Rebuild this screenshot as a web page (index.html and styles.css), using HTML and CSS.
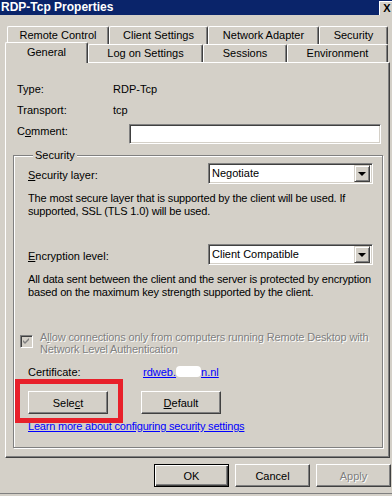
FILE: index.html
```html
<!DOCTYPE html>
<html lang="en">

<head>
  <meta charset="UTF-8">
  <meta name="viewport" content="width=device-width, initial-scale=1.0">
  <title>RDP-Tcp Properties</title>
  <link rel="stylesheet" href="styles.css">
</head>

<body>
  <div class="dialog">
    <div class="titlebar">
      <span class="title">RDP-Tcp Properties</span>
      <span class="close">X</span>
    </div>

    <div class="tabs">
      <div class="tabrow back">
        <div class="tab t-remote">Remote Control</div>
        <div class="tab t-client">Client Settings</div>
        <div class="tab t-network">Network Adapter</div>
        <div class="tab t-security">Security</div>
      </div>
      <div class="tabrow front">
        <div class="tab t-general active">General</div>
        <div class="tab t-logon">Log on Settings</div>
        <div class="tab t-sessions">Sessions</div>
        <div class="tab t-env">Environment</div>
      </div>
    </div>

    <div class="panel">
      <div class="info">
        <span>Type:</span><span>RDP-Tcp</span>
        <span>Transport:</span><span>tcp</span>
      </div>
      <div class="comment-row">
        <label>C<u>o</u>mment:</label>
        <div class="textbox"></div>
      </div>

      <fieldset class="group">
        <legend>Security</legend>

        <div class="setting first">
          <label><u>S</u>ecurity layer:</label>
          <div class="combo"><span>Negotiate</span><i class="drop"></i></div>
        </div>
        <p class="desc">The most secure layer that is supported by the client will be used. If<br>supported, SSL (TLS 1.0) will be used.</p>

        <div class="setting second">
          <label><u>E</u>ncryption level:</label>
          <div class="combo"><span>Client Compatible</span><i class="drop"></i></div>
        </div>
        <p class="desc">All data sent between the client and the server is protected by encryption<br>based on the maximum key strength supported by the client.</p>

        <div class="check-row">
          <span class="checkbox">
            <svg width="7" height="7" viewBox="0 0 7 7"><path d="M0 2 L2 4 L6 0 L6 2 L2 6 L0 4 Z" fill="#808080"/></svg>
          </span>
          <span class="disabled">A<u>l</u>low connections only from computers running Remote Desktop with<br>Network Level Authentication</span>
        </div>

        <div class="cert-row">
          <span>Certificate:</span>
          <a class="link">rdweb.<span class="redact"></span>n.nl</a>
        </div>

        <div class="btn-row">
          <button class="btn">Sele<u>c</u>t</button>
          <button class="btn"><u>D</u>efault</button>
        </div>

        <a class="link learn">Learn more about configuring security settings</a>
      </fieldset>
    </div>

    <div class="footer">
      <button class="btn default">OK</button>
      <button class="btn">Cancel</button>
      <button class="btn disabled">Apply</button>
    </div>
    <div class="edge"></div>

    <div class="callout"></div>
  </div>
</body>

</html>
```

FILE: styles.css
```css
body {
  margin: 0;
  background-color: #d4d0c8;
  font-family: "Liberation Sans", Arial, sans-serif;
  font-size: 11px;
  line-height: 13px;
  color: #000;
}

.dialog {
  position: relative;
  width: 392px;
  height: 496px;
  overflow: hidden;
  white-space: nowrap;
}

u {
  text-decoration: underline;
}

/* title bar */

.titlebar {
  height: 15px;
  background-color: #0a246a;
  display: flex;
  align-items: center;
  justify-content: space-between;
}

.title {
  color: #fff;
  font-weight: bold;
  font-size: 12px;
  padding-left: 1px;
}

.close {
  width: 14px;
  height: 13px;
  margin-right: -2px;
  background-color: #d4d0c8;
  border-top: 1px solid #fff;
  border-left: 1px solid #fff;
  font-weight: bold;
  font-size: 11px;
  line-height: 13px;
  text-align: center;
}

/* tabs */

.tabs {
  margin-top: 11px;
}

.tabrow {
  display: flex;
  height: 18px;
  align-items: flex-end;
}

.tabrow.back {
  padding-left: 7px;
}

.tabrow.front {
  padding-left: 5px;
}

.tab {
  box-sizing: border-box;
  height: 18px;
  border-top: 1px solid #fff;
  border-left: 1px solid #fff;
  border-right: 1px solid #404040;
  box-shadow: inset -1px 0 0 #808080;
  border-radius: 2px 2px 0 0;
  text-align: center;
  padding-top: 2px;
  background-color: #d4d0c8;
}

.t-remote { width: 102px; }
.t-client { width: 99px; }
.t-network { width: 111px; }
.t-security { width: 69px; }
.t-general { width: 83px; }
.t-logon { width: 115px; }
.t-sessions { width: 84px; }
.t-env { width: 101px; }

.tab.active {
  position: relative;
  z-index: 1;
  height: 21px;
  margin-bottom: -1px;
  padding-top: 3px;
}

/* panel */

.panel {
  box-sizing: border-box;
  width: 385px;
  height: 396px;
  margin-left: 5px;
  border-top: 1px solid #fff;
  border-left: 1px solid #fff;
  border-right: 1px solid #404040;
  border-bottom: 1px solid #404040;
  box-shadow: inset -1px -1px 0 #808080;
  padding-top: 20px;
}

.info {
  display: grid;
  grid-template-columns: 96px auto;
  row-gap: 8px;
  margin-left: 11px;
}

.comment-row {
  display: flex;
  align-items: flex-start;
  margin-left: 11px;
  margin-top: 7px;
}

.comment-row label {
  width: 112px;
  padding-top: 1px;
}

.textbox {
  box-sizing: border-box;
  width: 252px;
  height: 20px;
  background-color: #fff;
  border-top: 1px solid #808080;
  border-left: 1px solid #808080;
  border-right: 1px solid #fff;
  border-bottom: 1px solid #fff;
  box-shadow: inset 1px 1px 0 #404040, inset -1px -1px 0 #d4d0c8;
}

/* security group */

.group {
  margin: 5px 6px 0 7px;
  padding: 0 8px 14px 14px;
  border: 1px solid #808080;
  box-shadow: inset 1px 1px 0 #fff, 1px 1px 0 #fff;
}

.group legend {
  padding: 0 2px;
  margin-left: 5px;
  background-color: #d4d0c8;
}

.setting {
  display: grid;
  grid-template-columns: 180px 165px;
  align-items: center;
}

.setting label {
  padding-top: 4px;
}

.setting.first {
  margin-top: 1px;
}

.setting.second {
  margin-top: 26px;
}

.combo {
  box-sizing: border-box;
  height: 21px;
  display: flex;
  align-items: center;
  justify-content: space-between;
  background-color: #fff;
  border-top: 1px solid #808080;
  border-left: 1px solid #808080;
  border-right: 1px solid #fff;
  border-bottom: 1px solid #fff;
  box-shadow: inset 1px 1px 0 #404040, inset -1px -1px 0 #d4d0c8;
  padding: 2px 2px 2px 3px;
}

.drop {
  box-sizing: border-box;
  width: 16px;
  height: 17px;
  background-color: #d4d0c8;
  border-top: 1px solid #d4d0c8;
  border-left: 1px solid #d4d0c8;
  border-right: 1px solid #404040;
  border-bottom: 1px solid #404040;
  box-shadow: inset 1px 1px 0 #fff, inset -1px -1px 0 #808080;
  display: flex;
  align-items: center;
  justify-content: center;
}

.drop::after {
  content: "";
  border-left: 4px solid transparent;
  border-right: 4px solid transparent;
  border-top: 4px solid #000;
  margin-top: 1px;
}

.desc {
  margin: 8px 0 0 0;
  letter-spacing: -0.15px;
}

.check-row {
  display: flex;
  align-items: flex-start;
  margin-top: 32px;
  margin-left: -8px;
  line-height: 12px;
  letter-spacing: -0.15px;
}

.checkbox {
  box-sizing: border-box;
  flex: none;
  width: 13px;
  height: 13px;
  margin-top: 4px;
  margin-right: 7px;
  display: flex;
  align-items: center;
  justify-content: center;
  background-color: #d4d0c8;
  border-top: 1px solid #808080;
  border-left: 1px solid #808080;
  border-right: 1px solid #fff;
  border-bottom: 1px solid #fff;
  box-shadow: inset 1px 1px 0 #404040, inset -1px -1px 0 #d4d0c8;
}

.disabled {
  color: #808080;
  text-shadow: 1px 1px 0 #fff;
}

.cert-row {
  display: grid;
  grid-template-columns: 115px auto;
  margin-top: 11px;
}

.link {
  color: #0000ff;
  text-decoration: underline;
}

.redact {
  display: inline-block;
  width: 25px;
  height: 11px;
  vertical-align: -1px;
  background-color: #fff;
  border-radius: 4px;
}

.btn-row {
  display: flex;
  gap: 33px;
  margin-top: 12px;
}

.btn {
  box-sizing: border-box;
  width: 80px;
  height: 23px;
  padding: 0;
  font-family: inherit;
  font-size: 11px;
  color: #000;
  background-color: #d4d0c8;
  border-top: 1px solid #fff;
  border-left: 1px solid #fff;
  border-right: 1px solid #404040;
  border-bottom: 1px solid #404040;
  box-shadow: inset -1px -1px 0 #808080;
}

.learn {
  display: block;
  margin-top: 6px;
  letter-spacing: -0.2px;
}

/* footer */

.footer {
  display: flex;
  justify-content: flex-end;
  gap: 6px;
  margin-top: 6px;
  padding-right: 1px;
}

.footer .btn {
  width: 75px;
}

.footer .btn.default {
  border: 1px solid #000;
  box-shadow: inset 1px 1px 0 #fff, inset -1px -1px 0 #404040, inset -2px -2px 0 #808080;
}

.footer .btn.disabled {
  color: #808080;
}

.edge {
  margin-top: 6px;
  height: 1px;
  background-color: #808080;
}

/* red highlight drawn over the screenshot */

.callout {
  position: absolute;
  left: 15px;
  top: 379px;
  width: 108px;
  height: 44px;
  box-sizing: border-box;
  border: 5px solid #e8202a;
}
```
